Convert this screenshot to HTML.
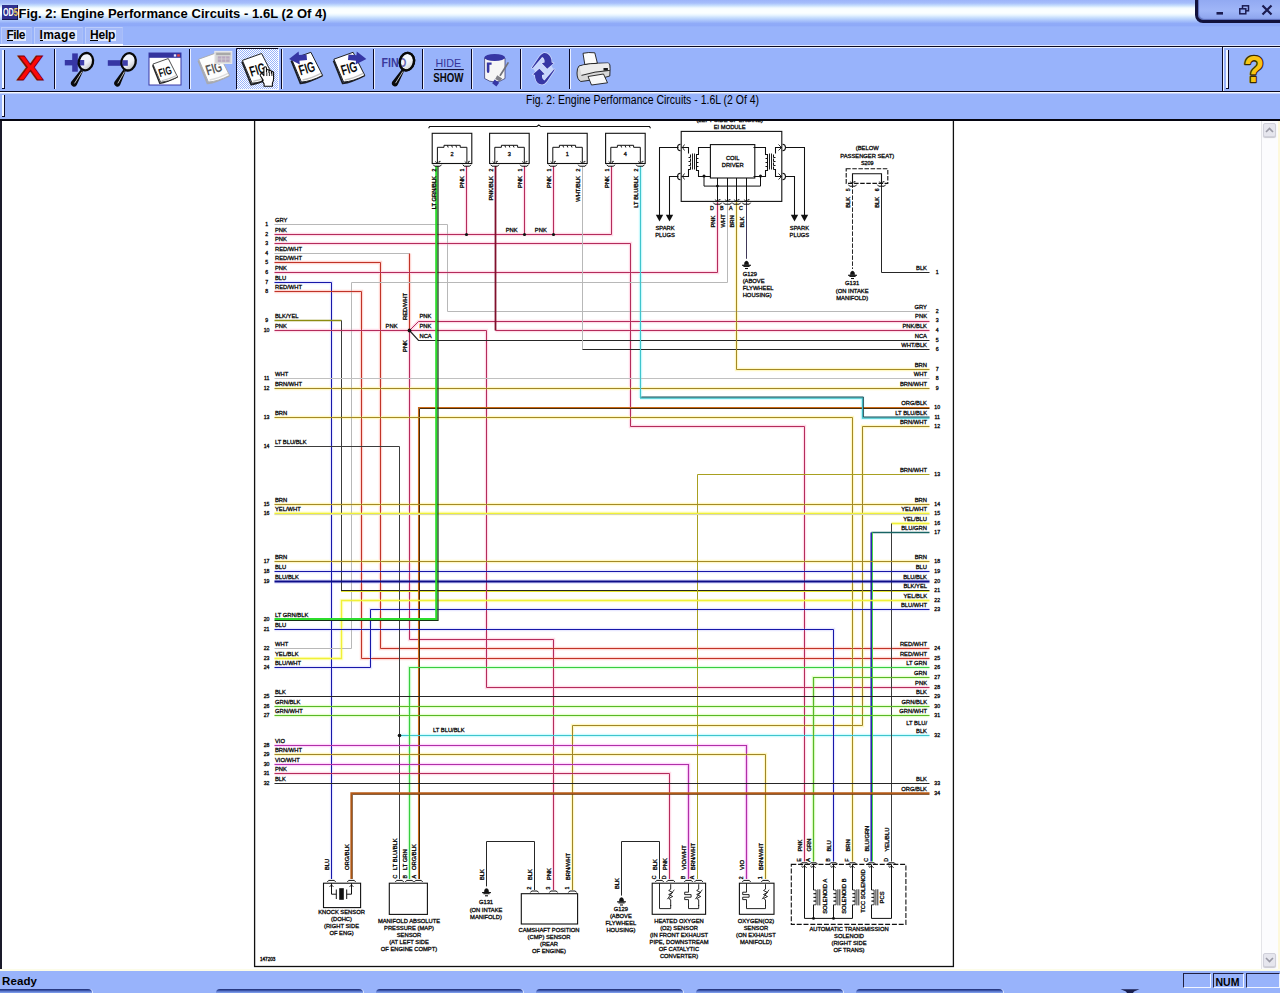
<!DOCTYPE html>
<html><head><meta charset="utf-8"><title>Fig. 2: Engine Performance Circuits - 1.6L (2 Of 4)</title>
<style>
html,body{margin:0;padding:0}
body{width:1280px;height:993px;overflow:hidden;position:relative;background:#98b3fb;font-family:"Liberation Sans",sans-serif;color:#000}
.abs{position:absolute}
#title{left:0;top:0;width:1280px;height:27px;background:linear-gradient(to bottom,#9cb4f9 0px,#a6befb 3px,#c6defd 5.5px,#f2fbff 8px,#fbffff 10px,#fbffff 13px,#eaf6ff 15px,#c4dcfd 18px,#a6c0fb 21px,#90abf8 23.5px,#8ea9f8 25.5px,#98b3fb 27px)}
#ttext{left:18.4px;top:5.5px;font:bold 13px "Liberation Sans",sans-serif;letter-spacing:.045px;white-space:nowrap;line-height:16px}
#appicon{left:2px;top:4.500px;width:16px;height:15.5px;background:#30308e;border-right:1px solid #181850;border-bottom:1px solid #181850;box-sizing:border-box}
#appicon span{position:absolute;left:.5px;top:1.500px;font:bold 11px/12px "Liberation Sans",sans-serif;color:#fff;letter-spacing:-.2px;transform:scaleX(.66);transform-origin:0 0;white-space:nowrap}
#appicon b{color:#f0d060}
#ctl{left:1195px;top:-6.500px;width:90px;height:23px;border:3px solid #12123c;border-radius:0 0 0 8px;background:linear-gradient(to bottom,#8ea6f0,#a0b6f8 60%,#8aa2ec);box-shadow:inset 1px -1px 1px #5a6cb8}
.menu{top:27px;height:17px;background:#a4baf9;border:1px solid #bccdfb;border-right-color:#aabff9;border-bottom-color:#aabff9;box-sizing:border-box}
.mt{top:29.5px;height:11px;background:#e2eafd;font:bold 12px/11px "Liberation Sans",sans-serif;white-space:nowrap;padding:0}
.mt u{text-decoration:none;border-bottom:1px solid #000;display:inline-block;height:10.5px}
#tbtop1{left:0;top:45px;width:1280px;height:1px;background:#dce6fe}
#tbtop0{left:0;top:44px;width:123px;height:2px;background:#f8fbff}
#tbtop2{left:0;top:46px;width:1280px;height:1px;background:#0a0a20}
#tbtop3{left:0;top:47px;width:1280px;height:1px;background:#e8f0ff}
#tbbot1{left:0;top:91px;width:1280px;height:1px;background:#0a0a20}
#tbbot2{left:0;top:92px;width:1280px;height:1px;background:#f4f8ff;box-shadow:0 1px 0 #c4d2fc}
.sep{top:49px;width:1px;height:40px;background:#0a0a28;box-shadow:1px 0 0 #e8eeff}
.grip{width:2px;background:#f4f8ff;border-right:1px solid #0a0a28;border-bottom:1px solid #0a0a28}
#cap{left:0;top:93px;width:1280px;height:26px}
#captext{left:526.2px;top:93px;font:12px "Liberation Sans",sans-serif;white-space:nowrap;transform:scaleX(.873);transform-origin:0 0;line-height:14px}
#content{left:0;top:119px;width:1280px;height:852px;background:#fff;border-top:2px solid #05050f;box-sizing:border-box}
#lborder{left:0;top:121px;width:2px;height:850px;background:#1a1a2a}
#sbar{left:1261px;top:121px;width:17px;height:849px;background:#fcfcfe;border-left:1px solid #e4e4e8;box-sizing:border-box}
#cream{left:1278px;top:121px;width:2px;height:849px;background:#fdf8dc}
#cream2{left:0;top:969px;width:1280px;height:2px;background:#fcfce8}
.sbtn{left:1263px;width:13px;height:14px;background:#e6e6ee;border:1px solid #d0d0da;border-radius:2px;box-sizing:border-box;box-shadow:0 1px 1px #c8c8d0}
#status{left:0;top:971px;width:1280px;height:22px;background:#98b3fb}
#ready{left:2px;top:974.500px;font:bold 11.5px "Liberation Sans",sans-serif;line-height:13px;letter-spacing:.1px}
.pane{top:973px;height:15px;border-top:1px solid #202040;border-left:1px solid #202040;border-right:1px solid #f0f4ff;border-bottom:1px solid #f0f4ff;box-sizing:border-box}
.tab{top:989px;height:6px;background:linear-gradient(to bottom,#1c2c6c 0,#3c54a8 1.5px,#6f8ee0 3px,#7d9cec 4px);border-radius:4px 4px 0 0;box-shadow:1px 0 0 #dfe8ff}
</style></head>
<body>
<div id="title" class="abs"></div>
<div id="appicon" class="abs"><span>OD<b>5</b></span></div>
<div id="ttext" class="abs">Fig. 2: Engine Performance Circuits - 1.6L (2 Of 4)</div>
<div id="ctl" class="abs"></div>
<svg class="abs" style="left:1210px;top:0" width="70" height="22" viewBox="1210 0 70 22">
 <rect x="1216.5" y="12" width="6.5" height="2.6" fill="#1c1c50"/>
 <g fill="none" stroke="#1c1c50" stroke-width="1.5"><rect x="1242.5" y="5.8" width="6" height="5"/><rect x="1239.8" y="8.8" width="6" height="5" fill="#98aef4"/></g>
 <path d="M1262.5 5.5l9 9M1271.5 5.5l-9 9" stroke="#1c1c50" stroke-width="2.2"/>
</svg>

<div class="abs menu" style="left:1px;width:31px"></div>
<div class="abs menu" style="left:34px;width:49px"></div>
<div class="abs menu" style="left:85px;width:38px"></div>
<div class="abs mt" style="left:6.500px;width:19.500px;letter-spacing:-.55px"><u>F</u>ile</div>
<div class="abs mt" style="left:39.500px;width:37.500px;letter-spacing:.28px"><u>I</u>mage</div>
<div class="abs mt" style="left:90px;width:26px;letter-spacing:-.2px"><u>H</u>elp</div>

<div id="tbtop1" class="abs"></div><div id="tbtop0" class="abs"></div><div id="tbtop2" class="abs"></div><div id="tbtop3" class="abs"></div>
<div id="tbbot1" class="abs"></div><div id="tbbot2" class="abs"></div>
<div class="abs grip" style="left:2px;top:50px;height:38px"></div>
<div class="abs grip" style="left:1226px;top:50px;height:38px"></div>
<div class="abs grip" style="left:2px;top:95px;height:21px"></div>
<div class="abs sep" style="left:54px"></div>
<div class="abs sep" style="left:189px"></div>
<div class="abs sep" style="left:281px"></div>
<div class="abs sep" style="left:373px"></div>
<div class="abs sep" style="left:422px"></div>
<div class="abs sep" style="left:471px"></div>
<div class="abs sep" style="left:520px"></div>
<div class="abs sep" style="left:569px"></div>
<div class="abs sep" style="left:1222px;top:47px;height:44px"></div>
<svg class="abs" style="left:0;top:47px" width="1280" height="44" viewBox="0 47 1280 44"><defs><linearGradient id="lg" x1="0" y1="0" x2="1" y2="1"><stop offset="0" stop-color="#fff"/><stop offset=".55" stop-color="#f8f8f8"/><stop offset="1" stop-color="#a8a8a0"/></linearGradient><pattern id="dith" width="2" height="2" patternUnits="userSpaceOnUse"><rect width="2" height="2" fill="#fff"/><rect width="1" height="1" fill="#98b3fb"/><rect x="1" y="1" width="1" height="1" fill="#98b3fb"/></pattern></defs><text x="30.2" y="80.400" text-anchor="middle" font-family="'Liberation Sans',sans-serif" font-weight="bold" font-size="35" textLength="26.600" lengthAdjust="spacingAndGlyphs" fill="#fc0808" stroke="#7a0404" stroke-width="1">X</text><rect x="64.8" y="60" width="19.4" height="5.4" fill="#3636a4"/><rect x="72.2" y="53.4" width="5.600" height="18.300" fill="#3636a4"/><path d="M80.69999999999999 69.7L71.0 82.1q-1 3 2 4.300q2.800 .9 3.900-1.700L83.1 71.10000000000001z" fill="#0a0a0a"/><path d="M81.89999999999999 71.7L74.5 83.39999999999999" stroke="#e8e8e8" stroke-width=".8"/><g transform="rotate(14 85.9 61.7)"><ellipse cx="85.9" cy="61.7" rx="7.100" ry="8.800" fill="url(#lg)" fill-opacity=".9" stroke="#080808" stroke-width="2.300"/></g><rect x="80" y="60" width="4.200" height="5.400" fill="#3636a4" fill-opacity=".95"/><rect x="107.8" y="60.2" width="20" height="5.600" fill="#3636a4"/><path d="M123.3 69.7L114.30000000000001 82.1q-1 3 2 4.300q2.800 .9 3.900-1.700L125.7 71.10000000000001z" fill="#0a0a0a"/><path d="M124.5 71.7L117.80000000000001 83.39999999999999" stroke="#e8e8e8" stroke-width=".8"/><g transform="rotate(14 128.6 61.8)"><ellipse cx="128.6" cy="61.8" rx="7.100" ry="8.800" fill="url(#lg)" fill-opacity=".9" stroke="#080808" stroke-width="2.300"/></g><rect x="122.5" y="60.2" width="5.300" height="5.600" fill="#3636a4" fill-opacity=".95"/><rect x="149" y="53" width="32" height="32" fill="#fff" stroke="#3a3aa6" stroke-width="1"/><rect x="149" y="53" width="32" height="4.800" fill="#34349e"/><rect x="173.8" y="54.3" width="2.400" height="2.300" fill="#e8e8ff"/><rect x="177.2" y="54.300" width="2.600" height="2.300" fill="#e84040"/><g transform="translate(152.200 58.300) scale(.8)"><g><path d="M.5 8.600L9.600 31.400q9-1.200 22-8" fill="none" stroke="#0c0c0c" stroke-width="1.700" stroke-opacity=".9"/><path d="M.9 7.200L20.100 .3L31.800 23.400Q20 29.500 10.600 30z" fill="#fff" stroke="#0c0c0c" stroke-width=".9"/><path d="M11.800 28q8.500-1.500 18.400-6.600" fill="none" stroke="#c4c4c4" stroke-width="1.400"/><text x="9.800" y="23.600" transform="rotate(-17 9.800 23.600)" font-family="'Liberation Sans',sans-serif" font-weight="bold" font-size="14.4" textLength="16.200" lengthAdjust="spacingAndGlyphs" fill="#0c0c0c">FIG</text></g></g><g transform="translate(197.8 52)"><path d="M.5 8.600L9.600 31.400q9-1.200 22-8" fill="none" stroke="#a8a8a8" stroke-width="1.700" stroke-opacity=".9"/><path d="M.9 7.200L20.100 .3L31.800 23.400Q20 29.500 10.600 30z" fill="#fdfdfd" stroke="#a8a8a8" stroke-width=".9"/><path d="M11.800 28q8.500-1.500 18.400-6.600" fill="none" stroke="#dcdcdc" stroke-width="1.400"/><text x="9.800" y="23.600" transform="rotate(-17 9.800 23.600)" font-family="'Liberation Sans',sans-serif" font-weight="bold" font-size="14.4" textLength="16.200" lengthAdjust="spacingAndGlyphs" fill="#585858">FIG</text></g><rect x="214.8" y="51.400" width="17" height="12" fill="#d4d4d4" stroke="#eaeaea" stroke-width="1"/><rect x="216.2" y="52.800" width="14.200" height="2.200" fill="#a8a8a8"/><rect x="217.800" y="56.300" width="11.800" height="5.600" fill="#b8a8c0"/><path d="M217.800 59h11.800M221.700 56.300v5.600M225.700 56.300v5.600" stroke="#d4d4d4" stroke-width=".7"/><rect x="236.500" y="48.500" width="42" height="41" fill="url(#dith)"/><path d="M236.500 89.500V48.500H278.500" fill="none" stroke="#0a0a28" stroke-width="1"/><path d="M278.500 48.500V89.500H236.500" fill="none" stroke="#f4f8ff" stroke-width="1"/><g transform="translate(241.5 53.2)"><path d="M.5 8.600L9.600 31.400q9-1.200 22-8" fill="none" stroke="#0c0c0c" stroke-width="1.700" stroke-opacity=".9"/><path d="M.9 7.200L20.100 .3L31.800 23.400Q20 29.500 10.600 30z" fill="#fff" stroke="#0c0c0c" stroke-width=".9"/><path d="M11.800 28q8.500-1.500 18.400-6.600" fill="none" stroke="#c4c4c4" stroke-width="1.400"/><text x="9.800" y="23.600" transform="rotate(-17 9.800 23.600)" font-family="'Liberation Sans',sans-serif" font-weight="bold" font-size="14.4" textLength="16.200" lengthAdjust="spacingAndGlyphs" fill="#0c0c0c">FIG</text></g><path d="M263.300 80.200l-2.800-4.200q-.9-1.700.6-2.300q1.200-.3 2.200 1.100l.6.800V68.200q0-1.500 1.300-1.500t1.300 1.500v3.800v-1.200q0-1.300 1.250-1.300t1.250 1.300v1.600v-.9q0-1.200 1.200-1.200t1.200 1.200v1.700v-.5q0-1.100 1.100-1.100t1.100 1.100v5.800q0 2.500-1.200 4.500v3.200h-8.300v-2.400q-1-1.300-2-3.600z" fill="#fff" stroke="#0a0a0a" stroke-width="1.100" stroke-linejoin="round"/><path d="M266.800 72.500v3.500M269.400 72.500v3.500M271.900 73v3" stroke="#0a0a0a" stroke-width=".9"/><g transform="translate(290.8 52)"><path d="M.5 8.600L9.600 31.400q9-1.200 22-8" fill="none" stroke="#0c0c0c" stroke-width="1.700" stroke-opacity=".9"/><path d="M.9 7.200L20.100 .3L31.800 23.400Q20 29.500 10.600 30z" fill="#fff" stroke="#0c0c0c" stroke-width=".9"/><path d="M11.800 28q8.500-1.500 18.400-6.600" fill="none" stroke="#c4c4c4" stroke-width="1.400"/><text x="9.800" y="23.600" transform="rotate(-17 9.800 23.600)" font-family="'Liberation Sans',sans-serif" font-weight="bold" font-size="14.4" textLength="16.200" lengthAdjust="spacingAndGlyphs" fill="#0c0c0c">FIG</text></g><path d="M289 58.200L299.200 51.600v3.600h7.600v5.600h-7.600v3.800z" fill="#3636a4" transform="rotate(-5 298 58)"/><g transform="translate(333 52)"><path d="M.5 8.600L9.600 31.400q9-1.200 22-8" fill="none" stroke="#0c0c0c" stroke-width="1.700" stroke-opacity=".9"/><path d="M.9 7.200L20.100 .3L31.800 23.400Q20 29.500 10.600 30z" fill="#fff" stroke="#0c0c0c" stroke-width=".9"/><path d="M11.800 28q8.500-1.500 18.400-6.600" fill="none" stroke="#c4c4c4" stroke-width="1.400"/><text x="9.800" y="23.600" transform="rotate(-17 9.800 23.600)" font-family="'Liberation Sans',sans-serif" font-weight="bold" font-size="14.4" textLength="16.200" lengthAdjust="spacingAndGlyphs" fill="#0c0c0c">FIG</text></g><path d="M366.400 58.200L356.200 51.600v3.600h-8v5.600h8v3.800z" fill="#3636a4" transform="rotate(5 357 58)"/><path d="M401.70000000000005 69.5L392.0 81.9q-1 3 2 4.300q2.800 .9 3.900-1.700L404.1 70.9z" fill="#0a0a0a"/><path d="M402.90000000000003 71.5L395.5 83.2" stroke="#e8e8e8" stroke-width=".8"/><g transform="rotate(14 406.9 61.6)"><ellipse cx="406.9" cy="61.6" rx="7.100" ry="8.800" fill="url(#lg)" fill-opacity=".9" stroke="#080808" stroke-width="2.300"/></g><text x="381.6" y="66.8" font-family="'Liberation Sans',sans-serif" font-weight="bold" font-size="12.4" textLength="24.800" lengthAdjust="spacingAndGlyphs" fill="#3a3a9c">FIND</text><g transform="rotate(14 406.9 61.6)"><ellipse cx="406.9" cy="61.6" rx="7.100" ry="8.800" fill="#fff" fill-opacity=".25" stroke="#080808" stroke-width="2.300"/></g><text x="435.600" y="66.800" font-family="'Liberation Sans',sans-serif" font-size="11.800" textLength="25.600" lengthAdjust="spacingAndGlyphs" fill="#34349a">HIDE</text><rect x="434" y="69" width="29.800" height="1.100" fill="#14143c"/><text x="433.300" y="81.600" font-family="'Liberation Sans',sans-serif" font-weight="bold" font-size="12.600" textLength="30.200" lengthAdjust="spacingAndGlyphs" fill="#0a0a0a">SHOW</text><path d="M484.600 58v20.500q5 3.500 10.200 3.500t10.200-3.500V58z" fill="#f6f6f6" stroke="#2a2a60" stroke-width=".7"/><ellipse cx="494.700" cy="57.500" rx="10.400" ry="3.500" fill="#3636a4"/><path d="M486.800 62.400h4.800v2.300h-2.200v6.200q0 2-1.300 2t-1.300-2z" fill="#3636a4"/><path d="M508.400 62.400L500 75.800" stroke="#707078" stroke-width="1.700"/><path d="M497.200 75.200l5 3.200l-2.400 3.200l-4.600-2.600z" fill="#808088"/><path d="M494.600 79.600l4.600 3.200l-2.800 3.600l-4.200-3.200z" fill="#3636a4"/><path d="M533 68.500L544 54.500L553.500 69L542.600 83z" fill="#eef2ff" fill-opacity=".55"/><g transform="translate(543.300 68.750)"><path d="M-11.4-1.05L-3.8-12.25Q-1-15.9 1.3-15.85Q6.700-15.500 8.100-8.950L8.300-6.300L10.200-5.550L3.900-.05L-1.400-5.550L1.300-6.350Q1.600-10.500-1.200-11.650L-2.600-9.900L-10.800-.5Z" fill="#3636a4" stroke="#e4eaff" stroke-width="1.300" stroke-opacity=".75" paint-order="stroke"/><path d="M-11.4-1.05L-3.8-12.25Q-1-15.9 1.3-15.85Q6.700-15.500 8.100-8.950L8.300-6.300L10.200-5.550L3.900-.05L-1.400-5.550L1.300-6.350Q1.600-10.500-1.200-11.650L-2.600-9.900L-10.800-.5Z" transform="rotate(180)" fill="#3636a4" stroke="#e4eaff" stroke-width="1.300" stroke-opacity=".75" paint-order="stroke"/></g><path d="M584.800 64.500L583 53.300q5.500-1.300 11.800-.5l2.600 10.500z" fill="#fcfcfc" stroke="#1a1a1a" stroke-width=".9"/><path d="M579 66q8-3 29.500-3q2 1 1.600 5.500l-.3 7.500q-9 3-29 5.500q-3.800-2-3.800-8.500q0-5 2-7z" fill="#d8d8d8" stroke="#1a1a1a" stroke-width=".9"/><path d="M579.500 66.500q9-2.500 29-3.200l.8 6.700q-15 .8-27.800 4.800z" fill="#ececec"/><path d="M581.500 75.400q13-4 28.300-5" fill="none" stroke="#1a1a1a" stroke-width=".9"/><rect x="603.500" y="68" width="4.400" height="2.600" fill="#1a1a1a"/><path d="M588 76.500l15.500-2.500l4 8.800l-16 2.200z" fill="#f8f8f8" stroke="#1a1a1a" stroke-width=".9"/><text x="1254" y="81.600" text-anchor="middle" font-family="'Liberation Sans',sans-serif" font-weight="bold" font-size="36" textLength="20.500" lengthAdjust="spacingAndGlyphs" fill="#f8c414" stroke="#3a2c00" stroke-width="2.600" paint-order="stroke" stroke-linejoin="round">?</text></svg>
<div id="cap" class="abs"></div>
<div id="captext" class="abs">Fig. 2: Engine Performance Circuits - 1.6L (2 Of 4)</div>
<div id="content" class="abs"></div>
<div id="lborder" class="abs"></div>
<div id="sbar" class="abs"></div><div id="cream" class="abs"></div><div id="cream2" class="abs"></div>
<div class="abs sbtn" style="top:123px"></div>
<div class="abs sbtn" style="top:953px"></div>
<svg class="abs" style="left:1263px;top:123px" width="13" height="845" viewBox="0 0 13 845" fill="none" stroke="#9a9aa6" stroke-width="1.6"><path d="M3 9l3.5-3.5L10 9"/><path d="M3 835l3.5 3.5L10 835"/></svg>
<svg id="dg" width="1280" height="850" viewBox="0 121 1280 850" style="position:absolute;left:0;top:121px;overflow:hidden" fill="none" stroke-linecap="butt" stroke-linejoin="miter">
<rect x="254.6" y="119.5" width="698.8" height="847" fill="#fff" stroke="#101010" stroke-width="1.3"/>
<polyline points="274.5,234.5 611.5,234.5 611.5,166.0" stroke="#ffdce8" stroke-width="3.4" />
<polyline points="466.5,166.0 466.5,234.5" stroke="#ffdce8" stroke-width="3.4" />
<polyline points="524.5,166.0 524.5,234.5" stroke="#ffdce8" stroke-width="3.4" />
<polyline points="553.5,166.0 553.5,234.5" stroke="#ffdce8" stroke-width="3.4" />
<polyline points="274.5,243.5 630.5,243.5 630.5,426.5 804.5,426.5 804.5,861.5" stroke="#ffdce8" stroke-width="3.4" />
<polyline points="409.5,253.5 409.5,330.5" stroke="#ffd8d4" stroke-width="3.4" />
<polyline points="409.5,330.5 409.5,639.5 553.5,639.5 553.5,890.0" stroke="#ffdce8" stroke-width="3.4" />
<polyline points="274.5,262.5 380.5,262.5 380.5,648.5 929.5,648.5" stroke="#ffd8d4" stroke-width="3.4" />
<polyline points="274.5,272.5 717.5,272.5 717.5,201.4" stroke="#ffdce8" stroke-width="3.4" />
<polyline points="274.5,282.5 331.5,282.5 331.5,879.0" stroke="#e8e8ff" stroke-width="3.4" />
<polyline points="274.5,291.5 361.5,291.5 361.5,658.5 929.5,658.5" stroke="#ffd8d4" stroke-width="3.4" />
<polyline points="274.5,330.5 409.5,330.5" stroke="#ffdce8" stroke-width="3.4" />
<polyline points="409.5,330.5 418.5,321.5 929.5,321.5" stroke="#ffdce8" stroke-width="3.4" />
<polyline points="409.5,330.5 486.5,330.5 486.5,687.5 929.5,687.5" stroke="#ffdce8" stroke-width="3.4" />
<polyline points="495.5,330.5 929.5,330.5" stroke="#ffdce8" stroke-width="3.5" />
<polyline points="274.5,388.5 929.5,388.5" stroke="#fff8c4" stroke-width="3.4" />
<polyline points="274.5,417.5 852.5,417.5 852.5,861.5" stroke="#fff8c4" stroke-width="3.4" />
<polyline points="399.5,735.5 929.5,735.5" stroke="#d0fcff" stroke-width="3.5999999999999996" />
<polyline points="640.5,166 640.5,398.0" stroke="#d0fcff" stroke-width="3.5" />
<polyline points="640.0,398.0 862.5,398.0 862.5,418.0 929.5,418.0" stroke="#d0fcff" stroke-width="3.7" />
<polyline points="736.5,201.4 736.5,369.5 929.5,369.5" stroke="#fff8c4" stroke-width="3.4" />
<polyline points="929.5,426.5 862.5,426.5 862.5,725.5 572.5,725.5 572.5,890.0" stroke="#fff8c4" stroke-width="3.4" />
<polyline points="274.5,504.5 929.5,504.5" stroke="#fff8c4" stroke-width="3.4" />
<polyline points="274.5,513.5 929.5,513.5" stroke="#ffffc8" stroke-width="3.8" />
<polyline points="929.5,523.5 891.5,523.5" stroke="#ffffc8" stroke-width="3.7" />
<polyline points="274.5,561.5 929.5,561.5" stroke="#fff8c4" stroke-width="3.4" />
<polyline points="274.5,571.5 929.5,571.5" stroke="#e8e8ff" stroke-width="3.4" />
<polyline points="274.5,581.5 929.5,581.5" stroke="#e0e0ff" stroke-width="4.3" />
<polyline points="929.5,600.5 341.5,600.5 341.5,658.5 274.5,658.5" stroke="#ffffc8" stroke-width="3.7" />
<polyline points="929.5,609.5 370.5,609.5 370.5,667.5 274.5,667.5" stroke="#e8e8ff" stroke-width="3.4" />
<polyline points="274.5,629.5 833.5,629.5 833.5,861.5" stroke="#e8e8ff" stroke-width="3.4" />
<polyline points="929.5,667.5 409.5,667.5 409.5,879.0" stroke="#dcffdc" stroke-width="3.5999999999999996" />
<polyline points="929.5,677.5 813.5,677.5 813.5,861.5" stroke="#e8ffd0" stroke-width="3.5999999999999996" />
<polyline points="274.5,706.5 929.5,706.5" stroke="#e8ffd0" stroke-width="3.5999999999999996" />
<polyline points="274.5,715.5 929.5,715.5" stroke="#e8ffd0" stroke-width="3.5999999999999996" />
<polyline points="274.5,745.5 746.5,745.5 746.5,879.0" stroke="#ffd8fc" stroke-width="3.5999999999999996" />
<polyline points="274.5,754.5 765.5,754.5 765.5,879.0" stroke="#fff8c4" stroke-width="3.4" />
<polyline points="274.5,764.5 688.5,764.5 688.5,879.0" stroke="#ffd8fc" stroke-width="3.5999999999999996" />
<polyline points="274.5,773.5 669.5,773.5 669.5,879.0" stroke="#ffdce8" stroke-width="3.4" />
<polyline points="274.5,224.5 447.5,224.5 447.5,311.5 929.5,311.5" stroke="#b8b8b8" stroke-width="1.0" />
<polyline points="274.5,234.5 611.5,234.5 611.5,166.0" stroke="#b42c5c" stroke-width="1.0" />
<polyline points="466.5,166.0 466.5,234.5" stroke="#b42c5c" stroke-width="1.0" />
<circle cx="466.5" cy="234.5" r="1.6" fill="#111" stroke="none"/>
<polyline points="524.5,166.0 524.5,234.5" stroke="#b42c5c" stroke-width="1.0" />
<circle cx="524.5" cy="234.5" r="1.6" fill="#111" stroke="none"/>
<polyline points="553.5,166.0 553.5,234.5" stroke="#b42c5c" stroke-width="1.0" />
<circle cx="553.5" cy="234.5" r="1.6" fill="#111" stroke="none"/>
<polyline points="274.5,243.5 630.5,243.5 630.5,426.5 804.5,426.5 804.5,861.5" stroke="#b42c5c" stroke-width="1.0" />
<polyline points="274.5,253.5 409.5,253.5" stroke="#b8b8b8" stroke-width="1.0" />
<polyline points="409.5,253.5 409.5,330.5" stroke="#c03428" stroke-width="1.0" />
<polyline points="409.5,330.5 409.5,639.5 553.5,639.5 553.5,890.0" stroke="#b42c5c" stroke-width="1.0" />
<polyline points="274.5,262.5 380.5,262.5 380.5,648.5 929.5,648.5" stroke="#c03428" stroke-width="1.0" />
<polyline points="274.5,272.5 717.5,272.5 717.5,201.4" stroke="#b42c5c" stroke-width="1.0" />
<polyline points="274.5,282.5 331.5,282.5 331.5,879.0" stroke="#1818a8" stroke-width="1.0" />
<polyline points="727.5,201.4 727.5,282.5 351.5,282.5 351.5,648.5 274.5,648.5" stroke="#b8b8b8" stroke-width="1.0" />
<polyline points="274.5,291.5 361.5,291.5 361.5,658.5 929.5,658.5" stroke="#c03428" stroke-width="1.0" />
<polyline points="274.5,320.5 341.5,320.5" stroke="#8c8c10" stroke-width="1.6" />
<polyline points="341.5,320.5 341.5,590.5" stroke="#3c3c3c" stroke-width="1.0" />
<polyline points="341.0,590.5 929.5,590.5" stroke="#282818" stroke-width="1.0" />
<polyline points="341.0,591.5 929.5,591.5" stroke="#e4e430" stroke-width="1.0" />
<polyline points="274.5,330.5 409.5,330.5" stroke="#b42c5c" stroke-width="1.0" />
<polyline points="409.5,330.5 418.5,321.5 929.5,321.5" stroke="#b42c5c" stroke-width="1.0" />
<polyline points="409.5,330.5 486.5,330.5 486.5,687.5 929.5,687.5" stroke="#b42c5c" stroke-width="1.0" />
<polyline points="409.5,330.5 418.5,340.5 929.5,340.5" stroke="#262626" stroke-width="1.2" />
<circle cx="409.5" cy="330.5" r="1.9" fill="#111" stroke="none"/>
<polyline points="495.5,166.0 495.5,330.5" stroke="#80102c" stroke-width="1.8" />
<polyline points="495.5,330.5 929.5,330.5" stroke="#b42c5c" stroke-width="1.1" />
<polyline points="582.5,166.0 582.5,349.5" stroke="#b8b8b8" stroke-width="1.0" />
<polyline points="582.5,349.5 929.5,349.5" stroke="#262626" stroke-width="1.2" />
<polyline points="274.5,378.5 929.5,378.5" stroke="#c0c0c0" stroke-width="1.0" />
<polyline points="274.5,388.5 929.5,388.5" stroke="#a08628" stroke-width="1.0" />
<polyline points="418.5,879 418.5,407.5 929.5,407.5" stroke="#cc6c18" stroke-width="1.1" />
<polyline points="419.5,879 419.5,408.5 929.5,408.5" stroke="#4a2c0c" stroke-width="1.0" />
<polyline points="274.5,417.5 852.5,417.5 852.5,861.5" stroke="#a48a26" stroke-width="1.0" />
<polyline points="274.5,446.5 399.5,446.5 399.5,879.0" stroke="#3c3c3c" stroke-width="1.0" />
<polyline points="399.5,735.5 929.5,735.5" stroke="#40c4cc" stroke-width="1.2" />
<circle cx="399.5" cy="735.5" r="1.8" fill="#111" stroke="none"/>
<polyline points="640.5,166 640.5,398.0" stroke="#40c4cc" stroke-width="1.1" />
<polyline points="640.0,398.0 862.5,398.0 862.5,418.0 929.5,418.0" stroke="#40c4cc" stroke-width="1.3" />
<polyline points="641.3,397.0 863.4,397.0 863.4,417.0 929.5,417.0" stroke="#204048" stroke-width="0.9" />
<polyline points="736.5,201.4 736.5,369.5 929.5,369.5" stroke="#a48a26" stroke-width="1.0" />
<polyline points="929.5,426.5 862.5,426.5 862.5,725.5 572.5,725.5 572.5,890.0" stroke="#a08628" stroke-width="1.0" />
<polyline points="929.5,474.5 697.5,474.5 697.5,879.0" stroke="#a8a020" stroke-width="1.0" />
<polyline points="274.5,504.5 929.5,504.5" stroke="#a48a26" stroke-width="1.0" />
<polyline points="274.5,513.5 929.5,513.5" stroke="#f0f038" stroke-width="1.4" />
<polyline points="274.5,514.5 929.5,514.5" stroke="#d4d4c0" stroke-width="1.0" />
<polyline points="929.5,523.5 891.5,523.5" stroke="#f0f038" stroke-width="1.3" />
<polyline points="891.5,523.5 891.5,861.5" stroke="#3c3c3c" stroke-width="1.0" />
<polyline points="929.5,532.5 871.5,532.5" stroke="#186464" stroke-width="1.4" />
<polyline points="871.2,532.5 871.2,861.5" stroke="#1c1ca4" stroke-width="1.5" />
<polyline points="872.5,532.5 872.5,861.5" stroke="#48d848" stroke-width="1.0" />
<polyline points="274.5,561.5 929.5,561.5" stroke="#a48a26" stroke-width="1.0" />
<polyline points="274.5,571.5 929.5,571.5" stroke="#1818a8" stroke-width="1.0" />
<polyline points="274.5,581.5 929.5,581.5" stroke="#0c0c88" stroke-width="1.9" />
<polyline points="929.5,600.5 341.5,600.5 341.5,658.5 274.5,658.5" stroke="#f0f038" stroke-width="1.3" />
<polyline points="929.5,609.5 370.5,609.5 370.5,667.5 274.5,667.5" stroke="#1818a8" stroke-width="1.0" />
<polyline points="274.5,619.0 436.3,619.0 436.3,166" stroke="#2cdc2c" stroke-width="2.2" />
<polyline points="274.5,620.5 438,620.5 438,166" stroke="#143414" stroke-width="1.2" />
<polyline points="274.5,629.5 833.5,629.5 833.5,861.5" stroke="#1818a8" stroke-width="1.0" />
<polyline points="929.5,667.5 409.5,667.5 409.5,879.0" stroke="#38cc40" stroke-width="1.2" />
<polyline points="929.5,677.5 813.5,677.5 813.5,861.5" stroke="#58b828" stroke-width="1.2" />
<polyline points="274.5,696.5 929.5,696.5" stroke="#262626" stroke-width="1.0" />
<polyline points="274.5,706.5 929.5,706.5" stroke="#58b828" stroke-width="1.2" />
<polyline points="274.5,715.5 929.5,715.5" stroke="#58b828" stroke-width="1.2" />
<polyline points="274.5,745.5 746.5,745.5 746.5,879.0" stroke="#b030a8" stroke-width="1.2" />
<polyline points="274.5,754.5 765.5,754.5 765.5,879.0" stroke="#a08628" stroke-width="1.0" />
<polyline points="274.5,764.5 688.5,764.5 688.5,879.0" stroke="#b030a8" stroke-width="1.2" />
<polyline points="274.5,773.5 669.5,773.5 669.5,879.0" stroke="#b42c5c" stroke-width="1.0" />
<polyline points="274.5,783.5 929.5,783.5" stroke="#262626" stroke-width="1.0" />
<polyline points="929.5,793.2 351.2,793.2 351.2,879" stroke="#b85c18" stroke-width="1.7" />
<polyline points="929.5,794.4 352.3,794.4 352.3,879" stroke="#6c3810" stroke-width="0.9" />
<polyline points="929.5,272.5 881.5,272.5 881.5,183.4" stroke="#262626" stroke-width="1.0" />
<polyline points="852.5,183.4 852.5,269.0" stroke="#262626" stroke-width="1.0" stroke-dasharray="4.5 1.5"/>
<polyline points="746.5,201.4 746.5,258.8" stroke="#403858" stroke-width="1.0" />
<polyline points="486.5,886.4 486.5,841.5 534.5,841.5 534.5,890.0" stroke="#262626" stroke-width="1.0" />
<polyline points="621.5,895.6 621.5,841.5 659.5,841.5 659.5,879.0" stroke="#262626" stroke-width="1.0" />
<path d="M744.3 264.7q0-3.400 2.200-3.600q2.200.2 2.200 3.600z" fill="#111" stroke="#111" stroke-width=".4"/>
<polyline points="742.1,265.3 750.9,265.3" stroke="#111" stroke-width="1.2" />
<polyline points="743.4,266.40000000000003 749.6,266.40000000000003" stroke="#111" stroke-width="1.1" />
<polyline points="745.0,268.5 748.0,268.5" stroke="#111" stroke-width="1.1" />
<path d="M850.3 274.7q0-3.400 2.200-3.600q2.200.2 2.200 3.600z" fill="#111" stroke="#111" stroke-width=".4"/>
<polyline points="848.1,275.3 856.9,275.3" stroke="#111" stroke-width="1.2" />
<polyline points="849.4,276.40000000000003 855.6,276.40000000000003" stroke="#111" stroke-width="1.1" />
<polyline points="851.0,278.5 854.0,278.5" stroke="#111" stroke-width="1.1" />
<path d="M484.3 892.0q0-3.400 2.200-3.600q2.200.2 2.200 3.600z" fill="#111" stroke="#111" stroke-width=".4"/>
<polyline points="482.1,892.6 490.9,892.6" stroke="#111" stroke-width="1.2" />
<polyline points="483.4,893.7 489.6,893.7" stroke="#111" stroke-width="1.1" />
<polyline points="485.0,895.8000000000001 488.0,895.8000000000001" stroke="#111" stroke-width="1.1" />
<path d="M619.3 901.1999999999999q0-3.400 2.200-3.600q2.200.2 2.200 3.600z" fill="#111" stroke="#111" stroke-width=".4"/>
<polyline points="617.1,901.8 625.9,901.8" stroke="#111" stroke-width="1.2" />
<polyline points="618.4,902.9 624.6,902.9" stroke="#111" stroke-width="1.1" />
<polyline points="620.0,905.0 623.0,905.0" stroke="#111" stroke-width="1.1" />
<rect x="432.2" y="133.3" width="39.6" height="30.2" stroke="#111" stroke-width="1.1"/>
<path d="M437.4 163.5V147.3h6.600v-2h16.200v2h6.700000000000056V163.5" stroke="#111" stroke-width="1"/>
<path d="M447.4 145.3l.8 2.200" stroke="#111" stroke-width="1"/>
<path d="M451.59999999999997 145.3l.8 2.200" stroke="#111" stroke-width="1"/>
<path d="M455.79999999999995 145.3l.8 2.200" stroke="#111" stroke-width="1"/>
<path d="M435.2 161.4l2.2 2.100M440.59999999999997 161.4h-1.6v2.100" stroke="#111" stroke-width=".8"/>
<path d="M433.29999999999995 164.7l1.300 1.500h5.6l1.300-1.500" stroke="#111" stroke-width="1"/>
<path d="M464.70000000000005 161.4l2.2 2.100M470.1 161.4h-1.6v2.100" stroke="#111" stroke-width=".8"/>
<path d="M462.79999999999995 164.7l1.300 1.500h5.6l1.300-1.500" stroke="#111" stroke-width="1"/>
<rect x="489.6" y="133.3" width="39.6" height="30.2" stroke="#111" stroke-width="1.1"/>
<path d="M494.8 163.5V147.3h6.600v-2h16.200v2h6.700000000000056V163.5" stroke="#111" stroke-width="1"/>
<path d="M504.8 145.3l.8 2.200" stroke="#111" stroke-width="1"/>
<path d="M509.0 145.3l.8 2.200" stroke="#111" stroke-width="1"/>
<path d="M513.2 145.3l.8 2.200" stroke="#111" stroke-width="1"/>
<path d="M492.6 161.4l2.2 2.100M498.0 161.4h-1.6v2.100" stroke="#111" stroke-width=".8"/>
<path d="M490.7 164.7l1.300 1.500h5.6l1.300-1.500" stroke="#111" stroke-width="1"/>
<path d="M522.1 161.4l2.2 2.100M527.5000000000001 161.4h-1.6v2.100" stroke="#111" stroke-width=".8"/>
<path d="M520.1999999999999 164.7l1.300 1.500h5.6l1.300-1.500" stroke="#111" stroke-width="1"/>
<rect x="547.6" y="133.3" width="39.6" height="30.2" stroke="#111" stroke-width="1.1"/>
<path d="M552.8000000000001 163.5V147.3h6.600v-2h16.200v2h6.699999999999999V163.5" stroke="#111" stroke-width="1"/>
<path d="M562.8000000000001 145.3l.8 2.200" stroke="#111" stroke-width="1"/>
<path d="M567.0000000000001 145.3l.8 2.200" stroke="#111" stroke-width="1"/>
<path d="M571.2 145.3l.8 2.200" stroke="#111" stroke-width="1"/>
<path d="M550.6 161.4l2.2 2.100M556.0000000000001 161.4h-1.6v2.100" stroke="#111" stroke-width=".8"/>
<path d="M548.6999999999999 164.7l1.300 1.500h5.6l1.300-1.500" stroke="#111" stroke-width="1"/>
<path d="M580.1 161.4l2.2 2.100M585.5000000000001 161.4h-1.6v2.100" stroke="#111" stroke-width=".8"/>
<path d="M578.1999999999999 164.7l1.300 1.500h5.6l1.300-1.500" stroke="#111" stroke-width="1"/>
<rect x="605.6" y="133.3" width="39.6" height="30.2" stroke="#111" stroke-width="1.1"/>
<path d="M610.8000000000001 163.5V147.3h6.600v-2h16.200v2h6.699999999999999V163.5" stroke="#111" stroke-width="1"/>
<path d="M620.8000000000001 145.3l.8 2.200" stroke="#111" stroke-width="1"/>
<path d="M625.0000000000001 145.3l.8 2.200" stroke="#111" stroke-width="1"/>
<path d="M629.2 145.3l.8 2.200" stroke="#111" stroke-width="1"/>
<path d="M608.6 161.4l2.2 2.100M614.0000000000001 161.4h-1.6v2.100" stroke="#111" stroke-width=".8"/>
<path d="M606.6999999999999 164.7l1.300 1.500h5.6l1.300-1.500" stroke="#111" stroke-width="1"/>
<path d="M638.1 161.4l2.2 2.100M643.5000000000001 161.4h-1.6v2.100" stroke="#111" stroke-width=".8"/>
<path d="M636.1999999999999 164.7l1.300 1.500h5.6l1.300-1.500" stroke="#111" stroke-width="1"/>
<path d="M428.6 128.3l1-1.800H537l1.800-1.600 1.800 1.600H649.5l1 1.800" stroke="#111" stroke-width="1.1"/>
<rect x="681.2" y="131.4" width="100.6" height="70" stroke="#111" stroke-width="1.1"/>
<rect x="710.4" y="144.6" width="44.4" height="33.4" stroke="#111" stroke-width="1.1"/>
<polyline points="717.5,178.0 717.5,201.4" stroke="#111" stroke-width="1.0" />
<path d="M713.4 202.7l1.300 1.500h5.6l1.300-1.500" stroke="#111" stroke-width="1"/>
<path d="M714.9 199.6l2.4 1.800M720.5 199.600h-1.600v1.800" stroke="#111" stroke-width=".8"/>
<polyline points="727.5,178.0 727.5,201.4" stroke="#111" stroke-width="1.0" />
<path d="M723.4 202.7l1.300 1.500h5.6l1.300-1.500" stroke="#111" stroke-width="1"/>
<path d="M724.9 199.6l2.4 1.800M730.5 199.600h-1.600v1.800" stroke="#111" stroke-width=".8"/>
<polyline points="736.5,178.0 736.5,201.4" stroke="#111" stroke-width="1.0" />
<path d="M732.4 202.7l1.300 1.500h5.6l1.300-1.500" stroke="#111" stroke-width="1"/>
<path d="M733.9 199.6l2.4 1.800M739.5 199.600h-1.600v1.800" stroke="#111" stroke-width=".8"/>
<polyline points="746.5,178.0 746.5,201.4" stroke="#111" stroke-width="1.0" />
<path d="M742.4 202.7l1.300 1.500h5.6l1.300-1.500" stroke="#111" stroke-width="1"/>
<path d="M743.9 199.6l2.4 1.800M749.5 199.600h-1.600v1.800" stroke="#111" stroke-width=".8"/>
<polyline points="704,176 704,186.1 760.5,186.1 760.5,176" stroke="#111" stroke-width="1.0" />
<circle cx="704.0" cy="176.0" r="1.5" fill="#111" stroke="none"/>
<circle cx="760.5" cy="176.0" r="1.5" fill="#111" stroke="none"/>
<circle cx="717.4" cy="186.1" r="1.4" fill="#111" stroke="none"/>
<path d="M680.5 144.3Q677.5 144.5 677.5 147.5Q677.5 150.5 680.5 150.7" stroke="#111" stroke-width="1.05" fill="none"/>
<path d="M678.5 147.5 L659.5 147.5 L659.5 216.5" stroke="#111" stroke-width="1.05" fill="none"/>
<path d="M655.8 214.8h7.400l-3.700 6.600z" fill="#111" stroke="none"/>
<path d="M684.5 144.5 L682.5 147.5M684.5 150.5 L682.5 147.5" stroke="#111" stroke-width=".9"/>
<path d="M680.5 173.3Q677.5 173.5 677.5 176.5Q677.5 179.5 680.5 179.7" stroke="#111" stroke-width="1.05" fill="none"/>
<path d="M678.5 176.5 L669.5 176.5 L669.5 216.5" stroke="#111" stroke-width="1.05" fill="none"/>
<path d="M665.8 214.8h7.400l-3.700 6.600z" fill="#111" stroke="none"/>
<path d="M684.5 173.5 L682.5 176.5M684.5 179.5 L682.5 176.5" stroke="#111" stroke-width=".9"/>
<path d="M681.5 147.5 L688.5 147.5 L688.5 153.5M681.5 176.5 L688.5 176.5 L688.5 169.5 L690.5 169.5" stroke="#111" stroke-width="1.05" fill="none"/>
<path d="M690.5 154.5 L690.5 169.5" stroke="#111" stroke-width="1.05" stroke-dasharray="2.9 1.100"/>
<path d="M690.5 157.5 L688.5 157.5" stroke="#111" stroke-width="1"/>
<path d="M690.5 161.5 L688.5 161.5" stroke="#111" stroke-width="1"/>
<path d="M690.5 165.5 L688.5 165.5" stroke="#111" stroke-width="1"/>
<path d="M692.5 153.5 L692.5 169.5M694.5 153.5 L694.5 169.5" stroke="#111" stroke-width=".95"/>
<path d="M710.5 147.5 L698.5 147.5 L698.5 154.5 L696.5 154.5 L696.5 170.5 L698.5 170.5 L698.5 176.5 L710.5 176.5" stroke="#111" stroke-width="1.05" fill="none"/>
<path d="M696.5 158.5 L698.5 158.5" stroke="#111" stroke-width="1"/>
<path d="M696.5 162.5 L698.5 162.5" stroke="#111" stroke-width="1"/>
<path d="M696.5 166.5 L698.5 166.5" stroke="#111" stroke-width="1"/>
<path d="M782.5 144.3Q785.5 144.5 785.5 147.5Q785.5 150.5 782.5 150.7" stroke="#111" stroke-width="1.05" fill="none"/>
<path d="M785.5 147.5 L804.5 147.5 L804.5 216.5" stroke="#111" stroke-width="1.05" fill="none"/>
<path d="M800.8 214.8h7.400l-3.700 6.600z" fill="#111" stroke="none"/>
<path d="M778.5 144.5 L781.5 147.5M778.5 150.5 L781.5 147.5" stroke="#111" stroke-width=".9"/>
<path d="M782.5 173.3Q785.5 173.5 785.5 176.5Q785.5 179.5 782.5 179.7" stroke="#111" stroke-width="1.05" fill="none"/>
<path d="M785.5 176.5 L794.5 176.5 L794.5 216.5" stroke="#111" stroke-width="1.05" fill="none"/>
<path d="M790.8 214.8h7.400l-3.700 6.600z" fill="#111" stroke="none"/>
<path d="M778.5 173.5 L781.5 176.5M778.5 179.5 L781.5 176.5" stroke="#111" stroke-width=".9"/>
<path d="M781.5 147.5 L775.5 147.5 L775.5 153.5M781.5 176.5 L775.5 176.5 L775.5 169.5 L773.5 169.5" stroke="#111" stroke-width="1.05" fill="none"/>
<path d="M773.5 154.5 L773.5 169.5" stroke="#111" stroke-width="1.05" stroke-dasharray="2.9 1.100"/>
<path d="M773.5 157.5 L775.5 157.5" stroke="#111" stroke-width="1"/>
<path d="M773.5 161.5 L775.5 161.5" stroke="#111" stroke-width="1"/>
<path d="M773.5 165.5 L775.5 165.5" stroke="#111" stroke-width="1"/>
<path d="M771.5 153.5 L771.5 169.5M769.5 153.5 L769.5 169.5" stroke="#111" stroke-width=".95"/>
<path d="M753.5 147.5 L765.5 147.5 L765.5 154.5 L767.5 154.5 L767.5 170.5 L765.5 170.5 L765.5 176.5 L753.5 176.5" stroke="#111" stroke-width="1.05" fill="none"/>
<path d="M767.5 158.5 L765.5 158.5" stroke="#111" stroke-width="1"/>
<path d="M767.5 162.5 L765.5 162.5" stroke="#111" stroke-width="1"/>
<path d="M767.5 166.5 L765.5 166.5" stroke="#111" stroke-width="1"/>
<rect x="846.2" y="168.8" width="41.6" height="14.6" stroke="#111" stroke-width="1.1" stroke-dasharray="4.5 1.6"/>
<path d="M852.5 183.400V173.700H881.5V183.400" stroke="#111" stroke-width="1.1"/>
<path d="M848.4 184.7l1.300 1.500h5.6l1.300-1.500" stroke="#111" stroke-width="1"/>
<path d="M849.9 181.600l2.400 1.800M855.5 181.600h-1.600v1.800" stroke="#111" stroke-width=".8"/>
<path d="M877.4 184.7l1.300 1.500h5.6l1.300-1.500" stroke="#111" stroke-width="1"/>
<path d="M878.9 181.600l2.400 1.800M884.5 181.600h-1.600v1.800" stroke="#111" stroke-width=".8"/>
<rect x="323.5" y="883.2" width="37.1" height="24.4" stroke="#111" stroke-width="1.1"/>
<path d="M331.5 883.200v11h4.800M351.5 883.200v11h-4.800M336.3 889.500v9.500M346.7 889.500v9.500" stroke="#111" stroke-width="1"/>
<rect x="339.2" y="888.2" width="4.600" height="11.600" fill="#111" stroke="none"/>
<path d="M327.4 881.9l1.300-1.500h5.6l1.300 1.500" stroke="#111" stroke-width="1"/>
<path d="M329.5 887l2-2.200l2 2.200" stroke="#111" stroke-width=".8"/>
<path d="M347.4 881.9l1.300-1.500h5.6l1.300 1.500" stroke="#111" stroke-width="1"/>
<path d="M349.5 887l2-2.200l2 2.200" stroke="#111" stroke-width=".8"/>
<rect x="389.3" y="883.2" width="38.1" height="31.2" stroke="#111" stroke-width="1.1"/>
<path d="M395.4 881.9l1.300-1.500h5.6l1.300 1.500" stroke="#111" stroke-width="1"/>
<path d="M405.4 881.9l1.300-1.500h5.6l1.300 1.500" stroke="#111" stroke-width="1"/>
<path d="M414.4 881.9l1.300-1.500h5.6l1.300 1.500" stroke="#111" stroke-width="1"/>
<rect x="521.3" y="893.7" width="56.3" height="30.3" stroke="#111" stroke-width="1.1"/>
<path d="M530.4 892.5l1.300-1.500h5.6l1.300 1.500" stroke="#111" stroke-width="1"/>
<path d="M549.4 892.5l1.300-1.500h5.6l1.300 1.500" stroke="#111" stroke-width="1"/>
<path d="M568.4 892.5l1.300-1.500h5.6l1.300 1.500" stroke="#111" stroke-width="1"/>
<rect x="652.2" y="883.2" width="53.4" height="31.1" stroke="#111" stroke-width="1.1"/>
<path d="M659.5 883.200V908.600H670.7V905" stroke="#111" stroke-width=".9"/>
<path d="M670.7 884.2v5l-2 1.300 4 2-4 2 4 2-4 2 2 1.300V906" stroke="#111" stroke-width=".9"/>
<path d="M667.3000000000001 899.2l7-9.500" stroke="#111" stroke-width=".8"/>
<path d="M688.5 906V908.600H698.7V905" stroke="#111" stroke-width=".9"/>
<path d="M688.5 883.2V892.2h-3.800v2.400h6.400v2.600h-6.400v2.400h3.800V906.5" stroke="#111" stroke-width=".9"/>
<path d="M698.7 884.2v5l-2 1.300 4 2-4 2 4 2-4 2 2 1.300V906" stroke="#111" stroke-width=".9"/>
<path d="M695.3000000000001 899.2l7-9.500" stroke="#111" stroke-width=".8"/>
<path d="M655.4 881.9l1.300-1.500h5.6l1.300 1.500" stroke="#111" stroke-width="1"/>
<path d="M666.6 881.9l1.300-1.500h5.6l1.300 1.500" stroke="#111" stroke-width="1"/>
<path d="M684.4 881.9l1.300-1.500h5.6l1.300 1.500" stroke="#111" stroke-width="1"/>
<path d="M694.6 881.9l1.300-1.500h5.6l1.300 1.500" stroke="#111" stroke-width="1"/>
<rect x="739.4" y="883.2" width="34.6" height="31.1" stroke="#111" stroke-width="1.1"/>
<path d="M746.5 883.2V892.2h-3.800v2.400h6.400v2.600h-6.400v2.400h3.800V906.5" stroke="#111" stroke-width=".9"/>
<path d="M765.5 884.2v5l-2 1.300 4 2-4 2 4 2-4 2 2 1.300V906" stroke="#111" stroke-width=".9"/>
<path d="M762.1 899.2l7-9.500" stroke="#111" stroke-width=".8"/>
<path d="M746.5 906V908.600H765.5V905" stroke="#111" stroke-width=".9"/>
<path d="M742.4 881.9l1.300-1.500h5.6l1.300 1.500" stroke="#111" stroke-width="1"/>
<path d="M761.4 881.9l1.300-1.500h5.6l1.300 1.500" stroke="#111" stroke-width="1"/>
<rect x="791.3" y="864.4" width="114.6" height="60" stroke="#111" stroke-width="1.1" stroke-dasharray="5 1.800"/>
<path d="M813.5 864.400V890M813.5 904.800V918.4" stroke="#111" stroke-width="1"/>
<path d="M813.5 890.0h2.600v3.700h-2.600" stroke="#111" stroke-width=".8"/>
<path d="M813.5 893.7h2.600v3.700h-2.600" stroke="#111" stroke-width=".8"/>
<path d="M813.5 897.4h2.600v3.700h-2.600" stroke="#111" stroke-width=".8"/>
<path d="M813.5 901.1h2.600v3.700h-2.600" stroke="#111" stroke-width=".8"/>
<path d="M817.9 889.300V905.400" stroke="#111" stroke-width=".9"/>
<path d="M819.8 889.300V905.400" stroke="#111" stroke-width=".9"/>
<path d="M833.5 864.400V890M833.5 904.800V918.4" stroke="#111" stroke-width="1"/>
<path d="M833.5 890.0h2.600v3.700h-2.600" stroke="#111" stroke-width=".8"/>
<path d="M833.5 893.7h2.600v3.700h-2.600" stroke="#111" stroke-width=".8"/>
<path d="M833.5 897.4h2.600v3.700h-2.600" stroke="#111" stroke-width=".8"/>
<path d="M833.5 901.1h2.600v3.700h-2.600" stroke="#111" stroke-width=".8"/>
<path d="M837.9 889.300V905.400" stroke="#111" stroke-width=".9"/>
<path d="M839.8 889.300V905.400" stroke="#111" stroke-width=".9"/>
<path d="M852.5 864.400V890M852.5 904.800V918.4" stroke="#111" stroke-width="1"/>
<path d="M852.5 890.0h2.600v3.700h-2.600" stroke="#111" stroke-width=".8"/>
<path d="M852.5 893.7h2.600v3.700h-2.600" stroke="#111" stroke-width=".8"/>
<path d="M852.5 897.4h2.600v3.700h-2.600" stroke="#111" stroke-width=".8"/>
<path d="M852.5 901.1h2.600v3.700h-2.600" stroke="#111" stroke-width=".8"/>
<path d="M856.9 889.300V905.400" stroke="#111" stroke-width=".9"/>
<path d="M858.8 889.300V905.400" stroke="#111" stroke-width=".9"/>
<path d="M871.5 864.400V890M871.5 904.800V918.4" stroke="#111" stroke-width="1"/>
<path d="M871.5 890.0h2.600v3.700h-2.600" stroke="#111" stroke-width=".8"/>
<path d="M871.5 893.7h2.600v3.700h-2.600" stroke="#111" stroke-width=".8"/>
<path d="M871.5 897.4h2.600v3.700h-2.600" stroke="#111" stroke-width=".8"/>
<path d="M871.5 901.1h2.600v3.700h-2.600" stroke="#111" stroke-width=".8"/>
<path d="M875.9 889.300V905.400" stroke="#111" stroke-width=".9"/>
<path d="M877.8 889.300V905.400" stroke="#111" stroke-width=".9"/>
<path d="M804.5 864.400V918.400H852.5" stroke="#111" stroke-width="1"/>
<path d="M871.5 918.400H891.5V864.400" stroke="#111" stroke-width="1"/>
<circle cx="813.5" cy="918.4" r="1.4" fill="#111" stroke="none"/>
<circle cx="833.5" cy="918.4" r="1.4" fill="#111" stroke="none"/>
<path d="M800.4 864.3l1.300-1.500h5.6l1.300 1.500" stroke="#111" stroke-width="1"/>
<path d="M802.3 868l2.200-2.400l2.200 2.400M801.2 866.200h1.600" stroke="#111" stroke-width=".8"/>
<path d="M809.4 864.3l1.300-1.500h5.6l1.300 1.500" stroke="#111" stroke-width="1"/>
<path d="M811.3 868l2.200-2.400l2.200 2.400M810.2 866.200h1.600" stroke="#111" stroke-width=".8"/>
<path d="M829.4 864.3l1.300-1.500h5.6l1.300 1.500" stroke="#111" stroke-width="1"/>
<path d="M831.3 868l2.200-2.400l2.200 2.400M830.2 866.200h1.600" stroke="#111" stroke-width=".8"/>
<path d="M848.4 864.3l1.300-1.500h5.6l1.300 1.500" stroke="#111" stroke-width="1"/>
<path d="M850.3 868l2.200-2.400l2.200 2.400M849.2 866.200h1.600" stroke="#111" stroke-width=".8"/>
<path d="M867.4 864.3l1.300-1.500h5.6l1.300 1.500" stroke="#111" stroke-width="1"/>
<path d="M869.3 868l2.200-2.400l2.200 2.400M868.2 866.200h1.600" stroke="#111" stroke-width=".8"/>
<path d="M887.4 864.3l1.300-1.500h5.6l1.300 1.500" stroke="#111" stroke-width="1"/>
<path d="M889.3 868l2.200-2.400l2.200 2.400M888.2 866.200h1.600" stroke="#111" stroke-width=".8"/>
<g fill="#111" stroke="#111" stroke-width="0.32" font-family="'Liberation Sans', sans-serif" font-weight="normal">
<text x="452.0" y="156.2" text-anchor="middle" font-size="5.6">2</text>
<text x="509.40000000000003" y="156.2" text-anchor="middle" font-size="5.6">3</text>
<text x="567.4" y="156.2" text-anchor="middle" font-size="5.6">1</text>
<text x="625.4" y="156.2" text-anchor="middle" font-size="5.6">4</text>
<text x="732.7" y="160.3" text-anchor="middle" font-size="5.8">COIL</text>
<text x="732.7" y="166.9" text-anchor="middle" font-size="5.8">DRIVER</text>
<text x="729.7" y="129.2" text-anchor="middle" font-size="5.8">EI MODULE</text>
<text x="729.7" y="121.8" text-anchor="middle" font-size="5.8">(LEFT SIDE OF ENGINE)</text>
<text x="665" y="230.2" text-anchor="middle" font-size="5.8">SPARK</text>
<text x="665" y="237" text-anchor="middle" font-size="5.8">PLUGS</text>
<text x="799.4" y="230.2" text-anchor="middle" font-size="5.8">SPARK</text>
<text x="799.4" y="237" text-anchor="middle" font-size="5.8">PLUGS</text>
<text x="711.9" y="210.4" text-anchor="middle" font-size="5.4">D</text>
<text x="714.9" y="227.5" text-anchor="start" font-size="5.8" transform="rotate(-90 714.9 227.5)">PNK</text>
<text x="721.9" y="210.4" text-anchor="middle" font-size="5.4">B</text>
<text x="724.9" y="227.5" text-anchor="start" font-size="5.8" transform="rotate(-90 724.9 227.5)">WHT</text>
<text x="730.9" y="210.4" text-anchor="middle" font-size="5.4">A</text>
<text x="733.9" y="227.5" text-anchor="start" font-size="5.8" transform="rotate(-90 733.9 227.5)">BRN</text>
<text x="740.9" y="210.4" text-anchor="middle" font-size="5.4">C</text>
<text x="743.9" y="227.5" text-anchor="start" font-size="5.8" transform="rotate(-90 743.9 227.5)">BLK</text>
<text x="742.7" y="276" text-anchor="start" font-size="5.8">G129</text>
<text x="742.7" y="283" text-anchor="start" font-size="5.8">(ABOVE</text>
<text x="742.7" y="290" text-anchor="start" font-size="5.8">FLYWHEEL</text>
<text x="742.7" y="297" text-anchor="start" font-size="5.8">HOUSING)</text>
<text x="867.2" y="150.2" text-anchor="middle" font-size="5.8">(BELOW</text>
<text x="867.2" y="157.9" text-anchor="middle" font-size="5.8">PASSENGER SEAT)</text>
<text x="867.2" y="164.9" text-anchor="middle" font-size="5.4">S209</text>
<text x="850.1" y="191.3" text-anchor="start" font-size="5.2" transform="rotate(-90 850.1 191.3)">5</text>
<text x="879.1" y="191.3" text-anchor="start" font-size="5.2" transform="rotate(-90 879.1 191.3)">6</text>
<text x="850.1" y="207.8" text-anchor="start" font-size="5.8" transform="rotate(-90 850.1 207.8)">BLK</text>
<text x="878.9" y="207.8" text-anchor="start" font-size="5.8" transform="rotate(-90 878.9 207.8)">BLK</text>
<text x="852.2" y="284.8" text-anchor="middle" font-size="5.8">G131</text>
<text x="852.2" y="293.2" text-anchor="middle" font-size="5.8">(ON INTAKE</text>
<text x="852.2" y="299.8" text-anchor="middle" font-size="5.8">MANIFOLD)</text>
<text x="435.9" y="171.6" text-anchor="start" font-size="5.2" transform="rotate(-90 435.9 171.6)">2</text>
<text x="435.9" y="176" text-anchor="end" font-size="5.8" transform="rotate(-90 435.9 176)">LT GRN/BLK</text>
<text x="463.9" y="171.6" text-anchor="start" font-size="5.2" transform="rotate(-90 463.9 171.6)">1</text>
<text x="463.9" y="176" text-anchor="end" font-size="5.8" transform="rotate(-90 463.9 176)">PNK</text>
<text x="492.9" y="171.6" text-anchor="start" font-size="5.2" transform="rotate(-90 492.9 171.6)">2</text>
<text x="492.9" y="176" text-anchor="end" font-size="5.8" transform="rotate(-90 492.9 176)">PNK/BLK</text>
<text x="521.9" y="171.6" text-anchor="start" font-size="5.2" transform="rotate(-90 521.9 171.6)">1</text>
<text x="521.9" y="176" text-anchor="end" font-size="5.8" transform="rotate(-90 521.9 176)">PNK</text>
<text x="550.9" y="171.6" text-anchor="start" font-size="5.2" transform="rotate(-90 550.9 171.6)">1</text>
<text x="550.9" y="176" text-anchor="end" font-size="5.8" transform="rotate(-90 550.9 176)">PNK</text>
<text x="579.9" y="171.6" text-anchor="start" font-size="5.2" transform="rotate(-90 579.9 171.6)">2</text>
<text x="579.9" y="176" text-anchor="end" font-size="5.8" transform="rotate(-90 579.9 176)">WHT/BLK</text>
<text x="608.9" y="171.6" text-anchor="start" font-size="5.2" transform="rotate(-90 608.9 171.6)">1</text>
<text x="608.9" y="176" text-anchor="end" font-size="5.8" transform="rotate(-90 608.9 176)">PNK</text>
<text x="637.9" y="171.6" text-anchor="start" font-size="5.2" transform="rotate(-90 637.9 171.6)">2</text>
<text x="637.9" y="176" text-anchor="end" font-size="5.8" transform="rotate(-90 637.9 176)">LT BLU/BLK</text>
<text x="511.7" y="231.9" text-anchor="middle" font-size="5.8">PNK</text>
<text x="540.8" y="231.9" text-anchor="middle" font-size="5.8">PNK</text>
<text x="407.1" y="320.0" text-anchor="start" font-size="5.8" transform="rotate(-90 407.1 320.0)">RED/WHT</text>
<text x="407.1" y="340.0" text-anchor="end" font-size="5.8" transform="rotate(-90 407.1 340.0)">PNK</text>
<text x="397.5" y="328.3" text-anchor="end" font-size="5.8">PNK</text>
<text x="419.5" y="318.3" text-anchor="start" font-size="5.8">PNK</text>
<text x="419.5" y="328.3" text-anchor="start" font-size="5.8">PNK</text>
<text x="419.5" y="338.1" text-anchor="start" font-size="5.8">NCA</text>
<text x="448.8" y="732.3" text-anchor="middle" font-size="5.8">LT BLU/BLK</text>
<text x="266.6" y="226.4" text-anchor="middle" font-size="5.2">1</text>
<text x="275" y="221.9" text-anchor="start" font-size="5.8">GRY</text>
<text x="266.6" y="236.4" text-anchor="middle" font-size="5.2">2</text>
<text x="275" y="231.9" text-anchor="start" font-size="5.8">PNK</text>
<text x="266.6" y="245.4" text-anchor="middle" font-size="5.2">3</text>
<text x="275" y="240.9" text-anchor="start" font-size="5.8">PNK</text>
<text x="266.6" y="255.4" text-anchor="middle" font-size="5.2">4</text>
<text x="275" y="250.9" text-anchor="start" font-size="5.8">RED/WHT</text>
<text x="266.6" y="264.4" text-anchor="middle" font-size="5.2">5</text>
<text x="275" y="259.9" text-anchor="start" font-size="5.8">RED/WHT</text>
<text x="266.6" y="274.4" text-anchor="middle" font-size="5.2">6</text>
<text x="275" y="269.9" text-anchor="start" font-size="5.8">PNK</text>
<text x="266.6" y="284.4" text-anchor="middle" font-size="5.2">7</text>
<text x="275" y="279.9" text-anchor="start" font-size="5.8">BLU</text>
<text x="266.6" y="293.4" text-anchor="middle" font-size="5.2">8</text>
<text x="275" y="288.9" text-anchor="start" font-size="5.8">RED/WHT</text>
<text x="266.6" y="322.4" text-anchor="middle" font-size="5.2">9</text>
<text x="275" y="317.9" text-anchor="start" font-size="5.8">BLK/YEL</text>
<text x="266.6" y="332.4" text-anchor="middle" font-size="5.2">10</text>
<text x="275" y="327.9" text-anchor="start" font-size="5.8">PNK</text>
<text x="266.6" y="380.4" text-anchor="middle" font-size="5.2">11</text>
<text x="275" y="375.9" text-anchor="start" font-size="5.8">WHT</text>
<text x="266.6" y="390.4" text-anchor="middle" font-size="5.2">12</text>
<text x="275" y="385.9" text-anchor="start" font-size="5.8">BRN/WHT</text>
<text x="266.6" y="419.4" text-anchor="middle" font-size="5.2">13</text>
<text x="275" y="414.9" text-anchor="start" font-size="5.8">BRN</text>
<text x="266.6" y="448.4" text-anchor="middle" font-size="5.2">14</text>
<text x="275" y="443.9" text-anchor="start" font-size="5.8">LT BLU/BLK</text>
<text x="266.6" y="506.4" text-anchor="middle" font-size="5.2">15</text>
<text x="275" y="501.9" text-anchor="start" font-size="5.8">BRN</text>
<text x="266.6" y="515.4" text-anchor="middle" font-size="5.2">16</text>
<text x="275" y="510.9" text-anchor="start" font-size="5.8">YEL/WHT</text>
<text x="266.6" y="563.4" text-anchor="middle" font-size="5.2">17</text>
<text x="275" y="558.9" text-anchor="start" font-size="5.8">BRN</text>
<text x="266.6" y="573.4" text-anchor="middle" font-size="5.2">18</text>
<text x="275" y="568.9" text-anchor="start" font-size="5.8">BLU</text>
<text x="266.6" y="583.4" text-anchor="middle" font-size="5.2">19</text>
<text x="275" y="578.9" text-anchor="start" font-size="5.8">BLU/BLK</text>
<text x="266.6" y="621.4" text-anchor="middle" font-size="5.2">20</text>
<text x="275" y="616.9" text-anchor="start" font-size="5.8">LT GRN/BLK</text>
<text x="266.6" y="631.4" text-anchor="middle" font-size="5.2">21</text>
<text x="275" y="626.9" text-anchor="start" font-size="5.8">BLU</text>
<text x="266.6" y="650.4" text-anchor="middle" font-size="5.2">22</text>
<text x="275" y="645.9" text-anchor="start" font-size="5.8">WHT</text>
<text x="266.6" y="660.4" text-anchor="middle" font-size="5.2">23</text>
<text x="275" y="655.9" text-anchor="start" font-size="5.8">YEL/BLK</text>
<text x="266.6" y="669.4" text-anchor="middle" font-size="5.2">24</text>
<text x="275" y="664.9" text-anchor="start" font-size="5.8">BLU/WHT</text>
<text x="266.6" y="698.4" text-anchor="middle" font-size="5.2">25</text>
<text x="275" y="693.9" text-anchor="start" font-size="5.8">BLK</text>
<text x="266.6" y="708.4" text-anchor="middle" font-size="5.2">26</text>
<text x="275" y="703.9" text-anchor="start" font-size="5.8">GRN/BLK</text>
<text x="266.6" y="717.4" text-anchor="middle" font-size="5.2">27</text>
<text x="275" y="712.9" text-anchor="start" font-size="5.8">GRN/WHT</text>
<text x="266.6" y="747.4" text-anchor="middle" font-size="5.2">28</text>
<text x="275" y="742.9" text-anchor="start" font-size="5.8">VIO</text>
<text x="266.6" y="756.4" text-anchor="middle" font-size="5.2">29</text>
<text x="275" y="751.9" text-anchor="start" font-size="5.8">BRN/WHT</text>
<text x="266.6" y="766.4" text-anchor="middle" font-size="5.2">30</text>
<text x="275" y="761.9" text-anchor="start" font-size="5.8">VIO/WHT</text>
<text x="266.6" y="775.4" text-anchor="middle" font-size="5.2">31</text>
<text x="275" y="770.9" text-anchor="start" font-size="5.8">PNK</text>
<text x="266.6" y="785.4" text-anchor="middle" font-size="5.2">32</text>
<text x="275" y="780.9" text-anchor="start" font-size="5.8">BLK</text>
<text x="937.2" y="274.4" text-anchor="middle" font-size="5.2">1</text>
<text x="927" y="269.5" text-anchor="end" font-size="5.8">BLK</text>
<text x="937.2" y="313.4" text-anchor="middle" font-size="5.2">2</text>
<text x="927" y="308.5" text-anchor="end" font-size="5.8">GRY</text>
<text x="937.2" y="322.4" text-anchor="middle" font-size="5.2">3</text>
<text x="927" y="317.5" text-anchor="end" font-size="5.8">PNK</text>
<text x="937.2" y="332.4" text-anchor="middle" font-size="5.2">4</text>
<text x="927" y="327.5" text-anchor="end" font-size="5.8">PNK/BLK</text>
<text x="937.2" y="342.4" text-anchor="middle" font-size="5.2">5</text>
<text x="927" y="337.5" text-anchor="end" font-size="5.8">NCA</text>
<text x="937.2" y="351.4" text-anchor="middle" font-size="5.2">6</text>
<text x="927" y="346.5" text-anchor="end" font-size="5.8">WHT/BLK</text>
<text x="937.2" y="371.4" text-anchor="middle" font-size="5.2">7</text>
<text x="927" y="366.5" text-anchor="end" font-size="5.8">BRN</text>
<text x="937.2" y="380.4" text-anchor="middle" font-size="5.2">8</text>
<text x="927" y="375.5" text-anchor="end" font-size="5.8">WHT</text>
<text x="937.2" y="390.4" text-anchor="middle" font-size="5.2">9</text>
<text x="927" y="385.5" text-anchor="end" font-size="5.8">BRN/WHT</text>
<text x="937.2" y="409.4" text-anchor="middle" font-size="5.2">10</text>
<text x="927" y="404.5" text-anchor="end" font-size="5.8">ORG/BLK</text>
<text x="937.2" y="419.4" text-anchor="middle" font-size="5.2">11</text>
<text x="927" y="414.5" text-anchor="end" font-size="5.8">LT BLU/BLK</text>
<text x="937.2" y="428.4" text-anchor="middle" font-size="5.2">12</text>
<text x="927" y="423.5" text-anchor="end" font-size="5.8">BRN/WHT</text>
<text x="937.2" y="476.4" text-anchor="middle" font-size="5.2">13</text>
<text x="927" y="471.5" text-anchor="end" font-size="5.8">BRN/WHT</text>
<text x="937.2" y="506.4" text-anchor="middle" font-size="5.2">14</text>
<text x="927" y="501.5" text-anchor="end" font-size="5.8">BRN</text>
<text x="937.2" y="515.4" text-anchor="middle" font-size="5.2">15</text>
<text x="927" y="510.5" text-anchor="end" font-size="5.8">YEL/WHT</text>
<text x="937.2" y="525.4" text-anchor="middle" font-size="5.2">16</text>
<text x="927" y="520.5" text-anchor="end" font-size="5.8">YEL/BLU</text>
<text x="937.2" y="534.4" text-anchor="middle" font-size="5.2">17</text>
<text x="927" y="529.5" text-anchor="end" font-size="5.8">BLU/GRN</text>
<text x="937.2" y="563.4" text-anchor="middle" font-size="5.2">18</text>
<text x="927" y="558.5" text-anchor="end" font-size="5.8">BRN</text>
<text x="937.2" y="573.4" text-anchor="middle" font-size="5.2">19</text>
<text x="927" y="568.5" text-anchor="end" font-size="5.8">BLU</text>
<text x="937.2" y="583.4" text-anchor="middle" font-size="5.2">20</text>
<text x="927" y="578.5" text-anchor="end" font-size="5.8">BLU/BLK</text>
<text x="937.2" y="592.4" text-anchor="middle" font-size="5.2">21</text>
<text x="927" y="587.5" text-anchor="end" font-size="5.8">BLK/YEL</text>
<text x="937.2" y="602.4" text-anchor="middle" font-size="5.2">22</text>
<text x="927" y="597.5" text-anchor="end" font-size="5.8">YEL/BLK</text>
<text x="937.2" y="611.4" text-anchor="middle" font-size="5.2">23</text>
<text x="927" y="606.5" text-anchor="end" font-size="5.8">BLU/WHT</text>
<text x="937.2" y="650.4" text-anchor="middle" font-size="5.2">24</text>
<text x="927" y="645.5" text-anchor="end" font-size="5.8">RED/WHT</text>
<text x="937.2" y="660.4" text-anchor="middle" font-size="5.2">25</text>
<text x="927" y="655.5" text-anchor="end" font-size="5.8">RED/WHT</text>
<text x="937.2" y="669.4" text-anchor="middle" font-size="5.2">26</text>
<text x="927" y="664.5" text-anchor="end" font-size="5.8">LT GRN</text>
<text x="937.2" y="679.4" text-anchor="middle" font-size="5.2">27</text>
<text x="927" y="674.5" text-anchor="end" font-size="5.8">GRN</text>
<text x="937.2" y="689.4" text-anchor="middle" font-size="5.2">28</text>
<text x="927" y="684.5" text-anchor="end" font-size="5.8">PNK</text>
<text x="937.2" y="698.4" text-anchor="middle" font-size="5.2">29</text>
<text x="927" y="693.5" text-anchor="end" font-size="5.8">BLK</text>
<text x="937.2" y="708.4" text-anchor="middle" font-size="5.2">30</text>
<text x="927" y="703.5" text-anchor="end" font-size="5.8">GRN/BLK</text>
<text x="937.2" y="717.4" text-anchor="middle" font-size="5.2">31</text>
<text x="927" y="712.5" text-anchor="end" font-size="5.8">GRN/WHT</text>
<text x="937.2" y="737.4" text-anchor="middle" font-size="5.2">32</text>
<text x="927" y="732.5" text-anchor="end" font-size="5.8">BLK</text>
<text x="937.2" y="785.4" text-anchor="middle" font-size="5.2">33</text>
<text x="927" y="780.5" text-anchor="end" font-size="5.8">BLK</text>
<text x="937.2" y="795.4" text-anchor="middle" font-size="5.2">34</text>
<text x="927" y="790.5" text-anchor="end" font-size="5.8">ORG/BLK</text>
<text x="927" y="725.3" text-anchor="end" font-size="5.8">LT BLU/</text>
<text x="341.5" y="914.2" text-anchor="middle" font-size="5.8">KNOCK SENSOR</text>
<text x="341.5" y="921.2" text-anchor="middle" font-size="5.8">(DOHC)</text>
<text x="341.5" y="928.3" text-anchor="middle" font-size="5.8">(RIGHT SIDE</text>
<text x="341.5" y="934.9" text-anchor="middle" font-size="5.8">OF ENG)</text>
<text x="328.9" y="870" text-anchor="start" font-size="5.8" transform="rotate(-90 328.9 870)">BLU</text>
<text x="348.9" y="870" text-anchor="start" font-size="5.8" transform="rotate(-90 348.9 870)">ORG/BLK</text>
<text x="396.9" y="878.6" text-anchor="start" font-size="5.2" transform="rotate(-90 396.9 878.6)">C</text>
<text x="396.9" y="870" text-anchor="start" font-size="5.8" transform="rotate(-90 396.9 870)">LT BLU/BLK</text>
<text x="406.9" y="878.6" text-anchor="start" font-size="5.2" transform="rotate(-90 406.9 878.6)">B</text>
<text x="406.9" y="870" text-anchor="start" font-size="5.8" transform="rotate(-90 406.9 870)">LT GRN</text>
<text x="415.9" y="878.6" text-anchor="start" font-size="5.2" transform="rotate(-90 415.9 878.6)">A</text>
<text x="415.9" y="870" text-anchor="start" font-size="5.8" transform="rotate(-90 415.9 870)">ORG/BLK</text>
<text x="409" y="923.0" text-anchor="middle" font-size="5.8">MANIFOLD ABSOLUTE</text>
<text x="409" y="929.95" text-anchor="middle" font-size="5.8">PRESSURE (MAP)</text>
<text x="409" y="936.9" text-anchor="middle" font-size="5.8">SENSOR</text>
<text x="409" y="943.85" text-anchor="middle" font-size="5.8">(AT LEFT SIDE</text>
<text x="409" y="950.8" text-anchor="middle" font-size="5.8">OF ENGINE COMPT)</text>
<text x="483.9" y="880" text-anchor="start" font-size="5.8" transform="rotate(-90 483.9 880)">BLK</text>
<text x="486" y="904" text-anchor="middle" font-size="5.8">G131</text>
<text x="486" y="912" text-anchor="middle" font-size="5.8">(ON INTAKE</text>
<text x="486" y="919" text-anchor="middle" font-size="5.8">MANIFOLD)</text>
<text x="530.9" y="889.5" text-anchor="start" font-size="5.2" transform="rotate(-90 530.9 889.5)">2</text>
<text x="531.9" y="880" text-anchor="start" font-size="5.8" transform="rotate(-90 531.9 880)">BLK</text>
<text x="549.9" y="889.5" text-anchor="start" font-size="5.2" transform="rotate(-90 549.9 889.5)">3</text>
<text x="550.9" y="880" text-anchor="start" font-size="5.8" transform="rotate(-90 550.9 880)">PNK</text>
<text x="568.9" y="889.5" text-anchor="start" font-size="5.2" transform="rotate(-90 568.9 889.5)">1</text>
<text x="569.9" y="880" text-anchor="start" font-size="5.8" transform="rotate(-90 569.9 880)">BRN/WHT</text>
<text x="549" y="932" text-anchor="middle" font-size="5.8">CAMSHAFT POSITION</text>
<text x="549" y="939" text-anchor="middle" font-size="5.8">(CMP) SENSOR</text>
<text x="549" y="946" text-anchor="middle" font-size="5.8">(REAR</text>
<text x="549" y="953" text-anchor="middle" font-size="5.8">OF ENGINE)</text>
<text x="618.9" y="889" text-anchor="start" font-size="5.8" transform="rotate(-90 618.9 889)">BLK</text>
<text x="620.9" y="910.7" text-anchor="middle" font-size="5.8">G129</text>
<text x="620.9" y="917.8000000000001" text-anchor="middle" font-size="5.8">(ABOVE</text>
<text x="620.9" y="924.9000000000001" text-anchor="middle" font-size="5.8">FLYWHEEL</text>
<text x="620.9" y="932.0" text-anchor="middle" font-size="5.8">HOUSING)</text>
<text x="656.3" y="879.2" text-anchor="start" font-size="5.2" transform="rotate(-90 656.3 879.2)">C</text>
<text x="656.9" y="870" text-anchor="start" font-size="5.8" transform="rotate(-90 656.9 870)">BLK</text>
<text x="666.3" y="879.2" text-anchor="start" font-size="5.2" transform="rotate(-90 666.3 879.2)">D</text>
<text x="666.9" y="870" text-anchor="start" font-size="5.8" transform="rotate(-90 666.9 870)">PNK</text>
<text x="685.3" y="879.2" text-anchor="start" font-size="5.2" transform="rotate(-90 685.3 879.2)">B</text>
<text x="685.9" y="870" text-anchor="start" font-size="5.8" transform="rotate(-90 685.9 870)">VIO/WHT</text>
<text x="694.3" y="879.2" text-anchor="start" font-size="5.2" transform="rotate(-90 694.3 879.2)">A</text>
<text x="694.9" y="870" text-anchor="start" font-size="5.8" transform="rotate(-90 694.9 870)">BRN/WHT</text>
<text x="679" y="922.9" text-anchor="middle" font-size="5.8">HEATED OXYGEN</text>
<text x="679" y="929.92" text-anchor="middle" font-size="5.8">(O2) SENSOR</text>
<text x="679" y="936.9399999999999" text-anchor="middle" font-size="5.8">(IN FRONT EXHAUST</text>
<text x="679" y="943.9599999999999" text-anchor="middle" font-size="5.8">PIPE, DOWNSTREAM</text>
<text x="679" y="950.98" text-anchor="middle" font-size="5.8">OF CATALYTIC</text>
<text x="679" y="958.0" text-anchor="middle" font-size="5.8">CONVERTER)</text>
<text x="743.3" y="879.2" text-anchor="start" font-size="5.2" transform="rotate(-90 743.3 879.2)">2</text>
<text x="743.9" y="870" text-anchor="start" font-size="5.8" transform="rotate(-90 743.9 870)">VIO</text>
<text x="762.3" y="879.2" text-anchor="start" font-size="5.2" transform="rotate(-90 762.3 879.2)">1</text>
<text x="762.9" y="870" text-anchor="start" font-size="5.8" transform="rotate(-90 762.9 870)">BRN/WHT</text>
<text x="755.9" y="922.9" text-anchor="middle" font-size="5.8">OXYGEN(O2)</text>
<text x="755.9" y="929.92" text-anchor="middle" font-size="5.8">SENSOR</text>
<text x="755.9" y="936.9399999999999" text-anchor="middle" font-size="5.8">(ON EXHAUST</text>
<text x="755.9" y="943.9599999999999" text-anchor="middle" font-size="5.8">MANIFOLD)</text>
<text x="826.8" y="913.8" text-anchor="start" font-size="5.8" transform="rotate(-90 826.8 913.8)">SOLENOID A</text>
<text x="846.1" y="913.8" text-anchor="start" font-size="5.8" transform="rotate(-90 846.1 913.8)">SOLENOID B</text>
<text x="864.8" y="912.8" text-anchor="start" font-size="5.8" transform="rotate(-90 864.8 912.8)">TCC SOLENOID</text>
<text x="884.3" y="903.4" text-anchor="start" font-size="5.8" transform="rotate(-90 884.3 903.4)">PCS</text>
<text x="801.3" y="861.8" text-anchor="start" font-size="5.2" transform="rotate(-90 801.3 861.8)">E</text>
<text x="801.9" y="851.5" text-anchor="start" font-size="5.8" transform="rotate(-90 801.9 851.5)">PNK</text>
<text x="810.3" y="861.8" text-anchor="start" font-size="5.2" transform="rotate(-90 810.3 861.8)">A</text>
<text x="810.9" y="851.5" text-anchor="start" font-size="5.8" transform="rotate(-90 810.9 851.5)">GRN</text>
<text x="830.3" y="861.8" text-anchor="start" font-size="5.2" transform="rotate(-90 830.3 861.8)">B</text>
<text x="830.9" y="851.5" text-anchor="start" font-size="5.8" transform="rotate(-90 830.9 851.5)">BLU</text>
<text x="849.3" y="861.8" text-anchor="start" font-size="5.2" transform="rotate(-90 849.3 861.8)">F</text>
<text x="849.9" y="851.5" text-anchor="start" font-size="5.8" transform="rotate(-90 849.9 851.5)">BRN</text>
<text x="868.3" y="861.8" text-anchor="start" font-size="5.2" transform="rotate(-90 868.3 861.8)">C</text>
<text x="868.9" y="851.5" text-anchor="start" font-size="5.8" transform="rotate(-90 868.9 851.5)">BLU/GRN</text>
<text x="888.3" y="861.8" text-anchor="start" font-size="5.2" transform="rotate(-90 888.3 861.8)">D</text>
<text x="888.9" y="851.5" text-anchor="start" font-size="5.8" transform="rotate(-90 888.9 851.5)">YEL/BLU</text>
<text x="849" y="931.3" text-anchor="middle" font-size="5.8">AUTOMATIC TRANSMISSION</text>
<text x="849" y="938.3" text-anchor="middle" font-size="5.8">SOLENOID</text>
<text x="849" y="945.3" text-anchor="middle" font-size="5.8">(RIGHT SIDE</text>
<text x="849" y="952.3" text-anchor="middle" font-size="5.8">OF TRANS)</text>
<text x="260" y="961.4" text-anchor="start" font-size="4.6">147203</text>
</g></svg>
<div id="status" class="abs"></div>
<div id="ready" class="abs">Ready</div>
<div class="abs pane" style="left:1183px;width:28px"></div>
<div class="abs pane" style="left:1213px;width:31px;font:bold 10.5px 'Liberation Sans',sans-serif;line-height:13px"><span style="position:absolute;left:1.500px;top:1.500px">NUM</span></div>
<div class="abs pane" style="left:1246px;width:34px"></div>
<div class="abs tab" style="left:-5px;width:97px"></div>
<div class="abs tab" style="left:216px;width:147px"></div>
<div class="abs tab" style="left:376px;width:147px"></div>
<div class="abs tab" style="left:536px;width:147px"></div>
<div class="abs tab" style="left:696px;width:147px"></div>
<div class="abs tab" style="left:856px;width:147px"></div>
<svg class="abs" style="left:1116px;top:988px" width="30" height="5" viewBox="0 0 30 5"><path d="M4.500 1.200h19l-5 2q-1.200.8-1.400 1.800h-6.200q-.2-1-1.400-1.800z" fill="#1a2050"/></svg>
</body></html>
